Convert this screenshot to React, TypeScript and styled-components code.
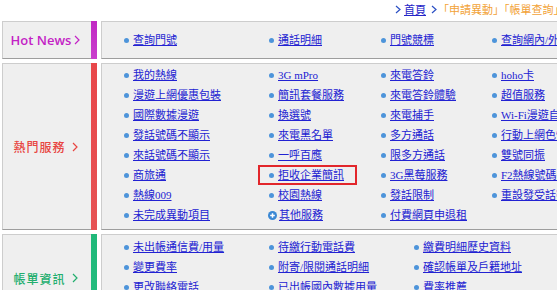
import React from 'react';
import styled, { createGlobalStyle, css } from 'styled-components';

interface LinkItem {
  label: string;
  boxed?: boolean;
  plus?: boolean;
}

interface SectionData {
  title: string;
  latin?: boolean;
  color: string;
  bar: string;
  cols: string;
  rows: number;
  padTop: number;
  padBottom: number;
  columns: LinkItem[][];
}

const GlobalStyle = createGlobalStyle`
  html, body {
    margin: 0;
    padding: 0;
    background: #fff;
    overflow: hidden;
  }
  body {
    font-family: "Noto Sans CJK TC", sans-serif;
  }
`;

const Page = styled.div`
  width: 760px;
  padding-left: 2px;
`;

const Crumbs = styled.div`
  display: flex;
  align-items: center;
  height: 18px;
  margin-bottom: 3px;
  padding-left: 393px;
  font-size: 11px;
  white-space: nowrap;
`;

const CrumbLink = styled.a`
  color: #2424c8;
  text-decoration: underline;
  margin: 0 5px 0 3px;
`;

const CrumbCurrent = styled.span`
  color: #f2a236;
  margin-left: 1px;
`;

const Chevron = styled.svg`
  flex: none;
  display: block;
`;

const Sections = styled.div`
  display: flex;
  flex-direction: column;
  gap: 4px;
`;

const Section = styled.section`
  display: flex;
  gap: 4px;
`;

const LabelBox = styled.div`
  flex: none;
  width: 95px;
  box-sizing: border-box;
  display: flex;
  background: #efefef;
  border: 1px solid #cdcdcd;
  border-right: none;
  border-bottom-color: #9d9d9d;
`;

const Label = styled.div<{ $color: string; $latin?: boolean }>`
  flex: 1;
  display: flex;
  align-items: center;
  justify-content: center;
  gap: ${(p) => (p.$latin ? '3px' : '6px')};
  padding-right: 3px;
  color: ${(p) => p.$color};
  font-weight: 600;
  white-space: nowrap;
  ${(p) =>
    p.$latin
      ? css`
          font-family: "Open Sans", sans-serif;
          font-size: 13px;
        `
      : css`
          font-family: "Noto Sans CJK TC", sans-serif;
          font-size: 12px;
          letter-spacing: 1px;
          font-weight: 500;
        `}
`;

const AccentBar = styled.div<{ $bar: string }>`
  flex: none;
  width: 6px;
  margin: -1px 0;
  background: ${(p) => p.$bar};
`;

const ContentBox = styled.div<{ $padTop: number; $padBottom: number }>`
  flex: none;
  width: 620px;
  box-sizing: border-box;
  background: #efefef;
  border: 1px solid #cdcdcd;
  border-bottom-color: #9d9d9d;
  padding: ${(p) => p.$padTop}px 0 ${(p) => p.$padBottom}px 22px;
`;

const LinkGrid = styled.div<{ $cols: string; $rows: number }>`
  display: grid;
  grid-template-columns: ${(p) => p.$cols};
  grid-template-rows: repeat(${(p) => p.$rows}, 20px);
  grid-auto-flow: column;
`;

const Item = styled.div<{ $boxed?: boolean }>`
  position: relative;
  justify-self: start;
  display: flex;
  align-items: center;
  gap: 4px;
  height: 20px;
  white-space: nowrap;
  ${(p) =>
    p.$boxed &&
    css`
      &::after {
        content: '';
        position: absolute;
        top: 0;
        bottom: 0;
        left: -11px;
        right: -13px;
        border: 2px solid #e2262b;
      }
    `}
`;

const Bullet = styled.span`
  flex: none;
  width: 5px;
  height: 5px;
  border-radius: 50%;
  background: #4d94da;
`;

const PlusIcon = styled.svg`
  flex: none;
  display: block;
  margin: 0 -2px 0 -1px;
`;

const Link = styled.a`
  color: #2222d2;
  text-decoration: underline;
  font-family: "Liberation Serif", "Noto Sans CJK TC", serif;
  font-size: 11px;
  line-height: 20px;
`;

const sections: SectionData[] = [
  {
    title: 'Hot News',
    latin: true,
    color: '#c322c5',
    bar: 'linear-gradient(#c128c4, #c93fcc)',
    cols: '145px 112px 111px 200px',
    rows: 1,
    padTop: 8,
    padBottom: 8,
    columns: [
      [{ label: '查詢門號' }],
      [{ label: '通話明細' }],
      [{ label: '門號競標' }],
      [{ label: '查詢網內/外門號' }],
    ],
  },
  {
    title: '熱門服務',
    color: '#e84541',
    bar: 'linear-gradient(#e8474a, #e65354)',
    cols: '145px 112px 111px 200px',
    rows: 8,
    padTop: 1,
    padBottom: 4,
    columns: [
      [
        { label: '我的熱線' },
        { label: '漫遊上網優惠包裝' },
        { label: '國際數據漫遊' },
        { label: '發話號碼不顯示' },
        { label: '來話號碼不顯示' },
        { label: '商旅通' },
        { label: '熱線009' },
        { label: '未完成異動項目' },
      ],
      [
        { label: '3G mPro' },
        { label: '簡訊套餐服務' },
        { label: '換選號' },
        { label: '來電黑名單' },
        { label: '一呼百應' },
        { label: '拒收企業簡訊', boxed: true },
        { label: '校園熱線' },
        { label: '其他服務', plus: true },
      ],
      [
        { label: '來電答鈴' },
        { label: '來電答鈴體驗' },
        { label: '來電捕手' },
        { label: '多方通話' },
        { label: '限多方通話' },
        { label: '3G黑莓服務' },
        { label: '發話限制' },
        { label: '付費網頁申退租' },
      ],
      [
        { label: 'hoho卡' },
        { label: '超值服務' },
        { label: 'Wi-Fi漫遊自動連線' },
        { label: '行動上網色情守門員' },
        { label: '雙號同振' },
        { label: 'F2熱線號碼變更' },
        { label: '重設發受話密碼' },
      ],
    ],
  },
  {
    title: '帳單資訊',
    color: '#22ae6e',
    bar: 'linear-gradient(#1fb879, #27bd80)',
    cols: '145px 145px 260px',
    rows: 4,
    padTop: 2,
    padBottom: 4,
    columns: [
      [
        { label: '未出帳通信費/用量' },
        { label: '變更費率' },
        { label: '更改聯絡電話' },
        { label: '帳單寄送方式' },
      ],
      [
        { label: '待繳行動電話費' },
        { label: '附寄/限閱通話明細' },
        { label: '已出帳國內數據用量' },
        { label: '電子帳單' },
      ],
      [
        { label: '繳費明細歷史資料' },
        { label: '確認帳單及戶籍地址' },
        { label: '費率推薦' },
        { label: '補寄收據' },
      ],
    ],
  },
];

const ChevronMark: React.FC<{ color: string; h?: number }> = ({ color, h = 10 }) => (
  <Chevron width="6" height={h} viewBox={`0 0 6 ${h}`}>
    <polyline
      points={`1,1 5,${h / 2} 1,${h - 1}`}
      fill="none"
      stroke={color}
      strokeWidth="1.2"
    />
  </Chevron>
);

const App: React.FC = () => (
  <Page>
    <GlobalStyle />
    <Crumbs>
      <ChevronMark color="#2a4fc4" h={9} />
      <CrumbLink href="#">首頁</CrumbLink>
      <ChevronMark color="#2a4fc4" h={9} />
      <CrumbCurrent>「申請異動」「帳單查詢」</CrumbCurrent>
    </Crumbs>
    <Sections>
      {sections.map((s) => (
        <Section key={s.title}>
          <LabelBox>
            <Label $color={s.color} $latin={s.latin}>
              {s.title}
              <ChevronMark color={s.color} />
            </Label>
            <AccentBar $bar={s.bar} />
          </LabelBox>
          <ContentBox $padTop={s.padTop} $padBottom={s.padBottom}>
            <LinkGrid $cols={s.cols} $rows={s.rows}>
              {s.columns.map((col, ci) =>
                Array.from({ length: s.rows }).map((_, ri) => {
                  const it = col[ri];
                  if (!it) return <span key={`${ci}-${ri}`} />;
                  return (
                    <Item key={`${ci}-${ri}`} $boxed={it.boxed}>
                      {it.plus ? (
                        <PlusIcon width="9" height="9" viewBox="0 0 9 9">
                          <circle cx="4.5" cy="4.5" r="4.5" fill="#3b88d4" />
                          <path d="M4.5 2.2v4.6M2.2 4.5h4.6" stroke="#fff" strokeWidth="1.5" />
                        </PlusIcon>
                      ) : (
                        <Bullet />
                      )}
                      <Link href="#">{it.label}</Link>
                    </Item>
                  );
                })
              )}
            </LinkGrid>
          </ContentBox>
        </Section>
      ))}
    </Sections>
  </Page>
);

export default App;
